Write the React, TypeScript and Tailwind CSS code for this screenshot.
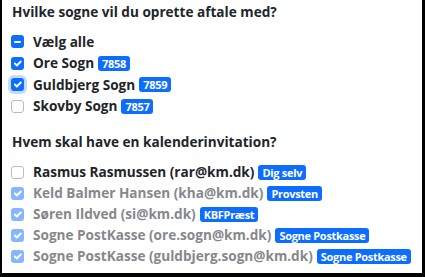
import React from "react";

type Box = "checked" | "unchecked" | "indeterminate" | "focus" | "disabled";

const parishes: { label: string; code: string; box: Box }[] = [
    { label: "Ore Sogn", code: "7858", box: "checked" },
    { label: "Guldbjerg Sogn", code: "7859", box: "focus" },
    { label: "Skovby Sogn", code: "7857", box: "unchecked" },
];

const invitees: { label: string; badge: string; box: Box }[] = [
    { label: "Rasmus Rasmussen (rar@km.dk)", badge: "Dig selv", box: "unchecked" },
    { label: "Keld Balmer Hansen (kha@km.dk)", badge: "Provsten", box: "disabled" },
    { label: "Søren Ildved (si@km.dk)", badge: "KBFPræst", box: "disabled" },
    { label: "Sogne PostKasse (ore.sogn@km.dk)", badge: "Sogne Postkasse", box: "disabled" },
    { label: "Sogne PostKasse (guldbjerg.sogn@km.dk)", badge: "Sogne Postkasse", box: "disabled" },
];

const CheckBox = ({ box }: { box: Box }) => {
    if (box === "unchecked") {
        return <span className="size-[13px] shrink-0 rounded-[3px] border border-[#b9bdc2] bg-white" />;
    }
    const bg = box === "disabled" ? "bg-[#86b7fe]" : "bg-[#0d6efd]";
    const ring = box === "focus" ? "shadow-[0_0_0_3px_rgba(13,110,253,0.25)]" : "";
    return (
        <span className={`size-[13px] shrink-0 rounded-[3px] ${bg} ${ring} flex items-center justify-center`}>
            {box === "indeterminate" ? (
                <span className="w-[7px] h-[2px] bg-white rounded-[1px]" />
            ) : (
                <svg viewBox="0 0 20 20" className="size-[13px]">
                    <path d="m6 10 3 3 6-6" fill="none" stroke="white" strokeWidth="3" strokeLinecap="round" strokeLinejoin="round" />
                </svg>
            )}
        </span>
    );
};

const Badge = ({ text }: { text: string }) => (
    <span className="ml-[4px] h-[15px] px-[4px] rounded-[3px] bg-[#0d6efd] text-white text-[11px] font-bold leading-[15px] tracking-[-0.3px]">
        {text}
    </span>
);

export default function App() {
    return (
        <div
            className="w-[425px] h-[277px] bg-white border-l-2 border-r-[3px] border-b-4 border-black pl-[9px] pt-[2px] text-[#212529]"
            style={{ fontFamily: '"Open Sans", sans-serif' }}
        >
            <h2 className="text-[13.6px] font-bold leading-[20px] pl-px">
                Hvilke sogne vil du oprette aftale med?
            </h2>

            <ul className="mt-[9px] flex flex-col">
                <li className="h-[21.5px] flex items-center gap-[9px] text-[13.6px] font-bold">
                    <CheckBox box="indeterminate" />
                    <span>Vælg alle</span>
                </li>
                {parishes.map((p) => (
                    <li key={p.code} className="h-[21.5px] flex items-center gap-[9px] text-[13.6px] font-bold">
                        <CheckBox box={p.box} />
                        <span className="flex items-center">
                            {p.label}
                            <Badge text={p.code} />
                        </span>
                    </li>
                ))}
            </ul>

            <h2 className="mt-[15px] text-[13.6px] font-bold leading-[20px] pl-px">
                Hvem skal have en kalenderinvitation?
            </h2>

            <ul className="mt-[10px] flex flex-col">
                {invitees.map((p) => (
                    <li key={p.label} className="h-[21px] flex items-center gap-[9px] text-[13.6px] font-bold">
                        <CheckBox box={p.box} />
                        <span className={`flex items-center ${p.box === "disabled" ? "text-[#85888c]" : ""}`}>
                            {p.label}
                            <Badge text={p.badge} />
                        </span>
                    </li>
                ))}
            </ul>
        </div>
    );
}
